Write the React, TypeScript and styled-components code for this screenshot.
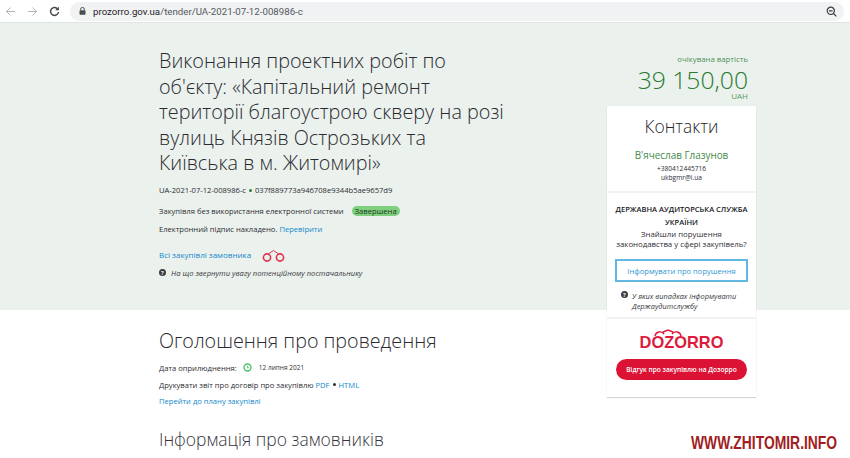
import React from 'react'
import styled, { createGlobalStyle } from 'styled-components'

const GlobalStyle = createGlobalStyle`
  html, body {
    margin: 0;
    padding: 0;
    background: #fff;
    overflow: hidden;
  }
  body {
    font-family: 'Open Sans', 'Noto Sans', sans-serif;
    color: #2d2d33;
  }
`

const Screen = styled.div`
  position: relative;
  width: 850px;
  height: 458px;
  overflow: hidden;
`

// browser chrome
const BrowserBar = styled.div`
  display: flex;
  align-items: center;
  height: 23px;
  box-sizing: border-box;
  padding: 1px 6px 1px 5px;
  background: #fff;
  border-bottom: 1px solid #dfe3e1;
`

const NavIcons = styled.div`
  display: flex;
  align-items: center;
  gap: 11px;
  width: 65px;
  flex: none;
`

const AddressBar = styled.div`
  flex: 1;
  display: flex;
  align-items: center;
  height: 19px;
  padding: 0 7px 0 9px;
  border-radius: 10px;
  background: #f0f2f3;
  font-family: 'Roboto', sans-serif;
  font-size: 9.7px;
  color: #55585c;
`

const Host = styled.span`
  color: #1f2225;
  margin-left: 7px;
`

const Spacer = styled.div`
  flex: 1;
`

// the green hero band runs behind both columns
const Content = styled.div`
  display: grid;
  grid-template-columns: 448px 149px;
  padding-left: 159px;
  height: 435px;
  background: linear-gradient(#ebf1ed 287px, #fff 287px);
`

const MainColumn = styled.div`
  display: flex;
  flex-direction: column;
`

const Title = styled.h1`
  margin: 25px 0 0;
  width: 346px;
  font-size: 19.8px;
  line-height: 25.5px;
  font-weight: 300;
  color: #2a2a30;
`

const Hash = styled.div`
  margin-top: 8px;
  font-size: 7.6px;
  line-height: 12px;
`

const Dot = styled.span<{ $dark?: boolean }>`
  display: inline-block;
  width: 3px;
  height: 3px;
  margin: 0 3px 1px 3px;
  background: ${p => (p.$dark ? '#2d2d33' : '#2f7d32')};
  border-radius: 50%;
`

const InfoRow = styled.div<{ $top: number }>`
  display: flex;
  align-items: center;
  margin-top: ${p => p.$top}px;
  font-size: 7.6px;
  line-height: 12px;
  white-space: pre;
`

const Status = styled.span`
  margin-left: 8px;
  padding: 0 3px;
  height: 10px;
  line-height: 10px;
  border-radius: 5px;
  background: #7ed07f;
  color: #1f3a22;
`

const Link = styled.a`
  color: #1289cc;
`

const BuyerLink = styled(Link)`
  font-size: 8px;
  margin-right: 11px;
`

const Hint = styled.div`
  display: flex;
  align-items: center;
  gap: 5px;
  margin-top: 5px;
  font-size: 7.6px;
  font-style: italic;
  line-height: 12px;
  color: #3a3a3e;
`

const QuestionMark = styled.span`
  display: inline-flex;
  align-items: center;
  justify-content: center;
  width: 7px;
  height: 7px;
  flex: none;
  border-radius: 50%;
  background: #3c3c40;
  color: #ebf1ed;
  font-size: 6px;
  font-style: normal;
  font-weight: 700;
`

const SectionTitle = styled.h2`
  margin: 48px 0 0;
  font-size: 19.7px;
  line-height: 28px;
  font-weight: 300;
  color: #2a2a30;
`

const SmallRow = styled.div<{ $top: number }>`
  display: flex;
  align-items: center;
  margin-top: ${p => p.$top}px;
  font-size: 7.6px;
  line-height: 12px;
  white-space: pre;
`

const ClockIcon = styled.svg`
  margin: 0 7px 0 6px;
`

const DateText = styled.span`
  font-size: 6.5px;
`

const SubTitle = styled.h3`
  margin: 20px 0 0;
  font-size: 17.5px;
  line-height: 24px;
  font-weight: 300;
  color: #35353b;
`

// right column
const SideColumn = styled.div`
  display: flex;
  flex-direction: column;
`

const Price = styled.div`
  display: flex;
  flex-direction: column;
  align-items: flex-end;
  padding: 31px 8px 0 0;
  height: 52px;
  color: #2a7a30;
`

const PriceLabel = styled.div`
  font-size: 7.8px;
  line-height: 11px;
  color: #4e9157;
`

const PriceValue = styled.div`
  font-size: 24.7px;
  line-height: 22px;
  font-weight: 300;
  margin-top: 4px;
  white-space: nowrap;
`

const Currency = styled.div`
  font-size: 8px;
  line-height: 9px;
  color: #5a9a62;
`

const Card = styled.div`
  display: flex;
  flex-direction: column;
  background: #fff;
  box-shadow: 0 1px 1px rgba(0, 0, 0, 0.16);
`

const CardBlock = styled.div`
  display: flex;
  flex-direction: column;
  align-items: center;
  text-align: center;
  padding: 0 8px;
  box-sizing: border-box;
  border-bottom: 2px solid #f1f2f2;
`

const ContactBlock = styled(CardBlock)`
  height: 87px;
  padding-top: 8px;
`

const ContactTitle = styled.div`
  font-size: 17.4px;
  line-height: 24px;
  font-weight: 300;
  color: #26262c;
`

const ContactName = styled.div`
  margin: 10px 0 2px;
  font-size: 9.9px;
  line-height: 14px;
  color: #3f8a48;
`

const ContactLine = styled.div`
  font-size: 6.6px;
  line-height: 9px;
  color: #2d2d33;
`

const AuditBlock = styled(CardBlock)`
  height: 126px;
  padding-top: 10px;
`

const AuditTitle = styled.div`
  font-size: 7.5px;
  line-height: 13px;
  font-weight: 600;
  color: #17171b;
  white-space: nowrap;
`

const AuditText = styled.div`
  font-size: 7.8px;
  line-height: 10px;
  white-space: nowrap;
`

const ReportButton = styled.div`
  display: flex;
  align-items: center;
  justify-content: center;
  align-self: stretch;
  box-sizing: border-box;
  height: 23px;
  margin-top: 10px;
  border: 2px solid #62b8e2;
  font-size: 7.6px;
  color: #2f98d0;
`

const AuditHint = styled.div`
  display: flex;
  gap: 4px;
  align-self: stretch;
  margin: 9px 0 0 6px;
  text-align: left;
  font-size: 7.4px;
  font-style: italic;
  line-height: 10px;
  color: #3a3a3e;
`

const DozorroBlock = styled(CardBlock)`
  height: 78px;
  padding: 13px 9px 0;
  border-bottom: 0;
`

const DozorroLogo = styled.div`
  position: relative;
  font-family: 'Liberation Sans', sans-serif;
  font-size: 16.4px;
  line-height: 20px;
  font-weight: 700;
  color: #dc1c3c;
`

const LogoCuffs = styled.svg`
  position: absolute;
  left: 13px;
  top: -3px;
`

const DozorroButton = styled.div`
  display: flex;
  align-items: center;
  justify-content: center;
  align-self: stretch;
  height: 21px;
  margin-top: 7px;
  border-radius: 11px;
  background: #dc1235;
  color: #fff;
  font-size: 6.6px;
  font-weight: 600;
`

const Watermark = styled.div`
  position: absolute;
  left: 691px;
  top: 432px;
  font-family: 'Liberation Sans', sans-serif;
  font-size: 19px;
  line-height: 22px;
  font-weight: 700;
  color: #a11d22;
  white-space: nowrap;
  transform: scaleX(0.73);
  transform-origin: left center;
`

const Handcuffs = () => (
  <svg width="23" height="13" viewBox="0 0 23 13" fill="none" stroke="#e0324f" strokeWidth="1.6">
    <circle cx="5" cy="8.5" r="3.6" />
    <circle cx="18" cy="8.5" r="3.6" />
    <path d="M7 4.5 L11.5 1.5 L16 4.5" strokeWidth="1" />
  </svg>
)

const App = () => {
  return (
    <Screen>
      <GlobalStyle />
      <BrowserBar>
        <NavIcons>
          <svg width="11" height="11" viewBox="0 0 11 11" fill="none" stroke="#b4b7ba" strokeWidth="1">
            <path d="M10 5.5H1.5M5.5 1.5l-4 4 4 4" />
          </svg>
          <svg width="11" height="11" viewBox="0 0 11 11" fill="none" stroke="#b4b7ba" strokeWidth="1">
            <path d="M1 5.5h8.5M5.5 1.5l4 4-4 4" />
          </svg>
          <svg width="11" height="11" viewBox="0 0 11 11" fill="none" stroke="#44474a" strokeWidth="1.5">
            <path d="M9 3.4A4 4 0 1 0 9.5 6" />
            <path d="M9.6 1v3H6.6" fill="#44474a" strokeWidth="0.6" />
          </svg>
        </NavIcons>
        <AddressBar>
          <svg width="7" height="8" viewBox="0 0 7 8" fill="#4a4d50">
            <rect x="0.5" y="3.2" width="6" height="4.6" rx="0.7" />
            <path d="M1.7 3.4V2.2a1.8 1.8 0 0 1 3.6 0v1.2" fill="none" stroke="#4a4d50" />
          </svg>
          <Host>prozorro.gov.ua</Host>/tender/UA-2021-07-12-008986-c
          <Spacer />
          <svg width="11" height="11" viewBox="0 0 11 11" fill="none" stroke="#3c3f42" strokeWidth="1.2">
            <circle cx="4.8" cy="4.8" r="3.6" />
            <path d="M7.5 7.5L10.3 10.3M3 4.8h3.6" />
          </svg>
        </AddressBar>
      </BrowserBar>

      <Content>
        <MainColumn>
          <Title>
            Виконання проектних робіт по об'єкту: «Капітальний ремонт території благоустрою скверу на розі
            вулиць Князів Острозьких та Київська в м. Житомирі»
          </Title>
          <Hash>
            UA-2021-07-12-008986-c
            <Dot />
            037f889773a946708e9344b5ae9657d9
          </Hash>
          <InfoRow $top={9}>
            Закупівля без використання електронної системи
            <Status>Завершена</Status>
          </InfoRow>
          <InfoRow $top={6}>
            Електронний підпис накладено. <Link>Перевірити</Link>
          </InfoRow>
          <InfoRow $top={14}>
            <BuyerLink>Всі закупівлі замовника</BuyerLink>
            <Handcuffs />
          </InfoRow>
          <Hint>
            <QuestionMark>?</QuestionMark>
            На що звернути увагу потенційному постачальнику
          </Hint>

          <SectionTitle>Оголошення про проведення</SectionTitle>
          <SmallRow $top={7}>
            Дата оприлюднення:
            <ClockIcon width="9" height="9" viewBox="0 0 9 9" fill="none" stroke="#4cc46a" strokeWidth="1.4">
              <circle cx="4.5" cy="4.5" r="3.5" />
              <path d="M4.5 2.8v2h1.4" strokeWidth="0.9" />
            </ClockIcon>
            <DateText>12 липня 2021</DateText>
          </SmallRow>
          <SmallRow $top={5}>
            Друкувати звіт про договір про закупівлю <Link>PDF</Link>
            <Dot $dark />
            <Link>HTML</Link>
          </SmallRow>
          <SmallRow $top={4}>
            <Link>Перейти до плану закупівлі</Link>
          </SmallRow>
          <SubTitle>Інформація про замовників</SubTitle>
        </MainColumn>

        <SideColumn>
          <Price>
            <PriceLabel>очікувана вартість</PriceLabel>
            <PriceValue>39 150,00</PriceValue>
            <Currency>UAH</Currency>
          </Price>
          <Card>
            <ContactBlock>
              <ContactTitle>Контакти</ContactTitle>
              <ContactName>В'ячеслав Глазунов</ContactName>
              <ContactLine>+380412445716</ContactLine>
              <ContactLine>ukbgmr@i.ua</ContactLine>
            </ContactBlock>
            <AuditBlock>
              <AuditTitle>ДЕРЖАВНА АУДИТОРСЬКА СЛУЖБА</AuditTitle>
              <AuditTitle>УКРАЇНИ</AuditTitle>
              <AuditText>Знайшли порушення</AuditText>
              <AuditText>законодавства у сфері закупівель?</AuditText>
              <ReportButton>Інформувати про порушення</ReportButton>
              <AuditHint>
                <QuestionMark>?</QuestionMark>
                <span>
                  У яких випадках інформувати
                  <br />
                  Держаудитслужбу
                </span>
              </AuditHint>
            </AuditBlock>
            <DozorroBlock>
              <DozorroLogo>
                DOZORRO
                <LogoCuffs width="30" height="8" viewBox="0 0 30 8" fill="none" stroke="#dc1c3c" strokeWidth="1.4">
                  <path d="M2 7a5 5 0 0 1 9-2M19 5a5 5 0 0 1 9 2M10 3l5-2 5 2" />
                </LogoCuffs>
              </DozorroLogo>
              <DozorroButton>Відгук про закупівлю на Дозорро</DozorroButton>
            </DozorroBlock>
          </Card>
        </SideColumn>
      </Content>

      <Watermark>WWW.ZHITOMIR.INFO</Watermark>
    </Screen>
  )
}

export default App
